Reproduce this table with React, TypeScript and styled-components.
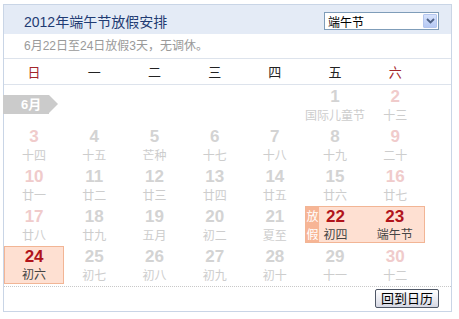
import React from 'react';
import styled, { createGlobalStyle } from 'styled-components';

type Day = { n: number; lunar: string; weekend?: boolean };

const weeks: (Day | null)[][] = [
  [null, null, null, null, null, { n: 1, lunar: '国际儿童节' }, { n: 2, lunar: '十三', weekend: true }],
  [
    { n: 3, lunar: '十四', weekend: true },
    { n: 4, lunar: '十五' },
    { n: 5, lunar: '芒种' },
    { n: 6, lunar: '十七' },
    { n: 7, lunar: '十八' },
    { n: 8, lunar: '十九' },
    { n: 9, lunar: '二十', weekend: true },
  ],
  [
    { n: 10, lunar: '廿一', weekend: true },
    { n: 11, lunar: '廿二' },
    { n: 12, lunar: '廿三' },
    { n: 13, lunar: '廿四' },
    { n: 14, lunar: '廿五' },
    { n: 15, lunar: '廿六' },
    { n: 16, lunar: '廿七', weekend: true },
  ],
  [
    { n: 17, lunar: '廿八', weekend: true },
    { n: 18, lunar: '廿九' },
    { n: 19, lunar: '五月' },
    { n: 20, lunar: '初二' },
    { n: 21, lunar: '夏至' },
  ],
  [
    null,
    { n: 25, lunar: '初七' },
    { n: 26, lunar: '初八' },
    { n: 27, lunar: '初九' },
    { n: 28, lunar: '初十' },
    { n: 29, lunar: '十一' },
    { n: 30, lunar: '十二', weekend: true },
  ],
];

const weekdays = ['日', '一', '二', '三', '四', '五', '六'];

const App = () => {
  return (
    <Page>
      <GlobalStyle />
      <Box>
        <Header>
          <Title>2012年端午节放假安排</Title>
          <Select>
            <span>端午节</span>
            <SelectArrow>
              <svg width='9' height='6' viewBox='0 0 9 6'>
                <path d='M1 1 L4.5 4.5 L8 1' stroke='#4d6185' strokeWidth='1.8' fill='none' />
              </svg>
            </SelectArrow>
          </Select>
        </Header>
        <Sub>6月22日至24日放假3天，无调休。</Sub>
        <WeekRow>
          {weekdays.map((w, i) => (
            <WeekName key={w} $red={i === 0 || i === 6}>
              {w}
            </WeekName>
          ))}
        </WeekRow>
        <Grid>
          {weeks.map((week, wi) => (
            <React.Fragment key={wi}>
              {wi === 0 && (
                <TagCell>
                  <MonthTag>6月</MonthTag>
                </TagCell>
              )}
              {week.map((d, di) => {
                if (wi === 0 && di < 5) return null;
                if (!d) {
                  if (wi === 4 && di === 0) {
                    return (
                      <HiCell key={di}>
                        <HiNum>24</HiNum>
                        <HiLunar>初六</HiLunar>
                      </HiCell>
                    );
                  }
                  return <Cell key={di} />;
                }
                return (
                  <Cell key={di}>
                    <Num $weekend={d.weekend}>{d.n}</Num>
                    <Lunar>{d.lunar}</Lunar>
                  </Cell>
                );
              })}
              {wi === 3 && (
                <HolidayBlock>
                  <Strip>
                    <span>放</span>
                    <span>假</span>
                  </Strip>
                  <HiDay>
                    <HiNum>22</HiNum>
                    <HiLunar>初四</HiLunar>
                  </HiDay>
                  <HiDay>
                    <HiNum>23</HiNum>
                    <HiLunar>端午节</HiLunar>
                  </HiDay>
                </HolidayBlock>
              )}
            </React.Fragment>
          ))}
        </Grid>
        <Footer>
          <BackButton>回到日历</BackButton>
        </Footer>
      </Box>
    </Page>
  );
};

const GlobalStyle = createGlobalStyle`
  body {
    margin: 0;
    background: #fff;
    font-family: 'Liberation Sans', 'Noto Sans CJK SC', sans-serif;
  }
`;

const Page = styled.div`
  padding: 4px 0 0 3px;
`;

const Box = styled.div`
  width: 447px;
  border: 1px solid #c9d5e6;
  background: #fff;
`;

const Header = styled.div`
  height: 29px;
  background: #e4ebf6;
  display: flex;
  align-items: center;
  justify-content: space-between;
  padding: 0 12px 0 20px;
`;

const Title = styled.div`
  font-size: 14px;
  color: #1f3b73;
  margin-top: 2px;
`;

const Select = styled.div`
  box-sizing: border-box;
  width: 115px;
  height: 18px;
  border: 1px solid #7f9db9;
  background: #fff;
  display: flex;
  align-items: center;
  justify-content: space-between;
  padding: 0 1px 0 3px;
  font-size: 12px;
  color: #000;
  margin-top: 3px;
`;

const SelectArrow = styled.div`
  box-sizing: border-box;
  width: 14px;
  height: 14px;
  border: 1px solid #b4c6ee;
  border-radius: 1px;
  background: linear-gradient(#d6e2fc, #b6c9f4);
  display: flex;
  align-items: center;
  justify-content: center;
`;

const Sub = styled.div`
  box-sizing: border-box;
  height: 25px;
  border-bottom: 1px solid #dde3ec;
  padding-left: 20px;
  font-size: 12px;
  line-height: 24px;
  color: #9a9a9a;
`;

const WeekRow = styled.div`
  box-sizing: border-box;
  height: 26px;
  border-bottom: 1px solid #dde3ec;
  display: grid;
  grid-template-columns: repeat(7, 60.2px);
  align-items: center;
`;

const WeekName = styled.div<{ $red?: boolean }>`
  text-align: center;
  font-size: 13px;
  color: ${(p) => (p.$red ? '#a3262b' : '#222')};
`;

const Grid = styled.div`
  display: grid;
  grid-template-columns: repeat(7, 60.2px);
  grid-auto-rows: 40px;
  margin-bottom: 1px;
`;

const Cell = styled.div`
  display: flex;
  flex-direction: column;
  align-items: center;
  padding-top: 2px;
`;

const TagCell = styled.div`
  grid-column: span 5;
  display: flex;
  align-items: center;
  padding-bottom: 2px;
`;

const MonthTag = styled.div`
  position: relative;
  width: 46px;
  height: 19px;
  margin-left: -1px;
  background: #cbcbcb;
  color: #fff;
  font-size: 13px;
  font-weight: bold;
  line-height: 19px;
  padding-left: 18px;
  box-sizing: border-box;
  &::after {
    content: '';
    position: absolute;
    right: -9px;
    top: 0;
    border-left: 9px solid #cbcbcb;
    border-top: 9.5px solid transparent;
    border-bottom: 9.5px solid transparent;
  }
`;

const Num = styled.div<{ $weekend?: boolean }>`
  font-size: 17px;
  font-weight: bold;
  line-height: 20px;
  color: ${(p) => (p.$weekend ? '#f0cbcb' : '#d3d3d3')};
`;

const Lunar = styled.div`
  font-size: 12px;
  line-height: 18px;
  color: #cdcdcd;
`;

const HiCell = styled.div`
  box-sizing: border-box;
  margin: 1px 0 1px 0;
  border: 1px solid #f2b595;
  background: #fee0d2;
  display: flex;
  flex-direction: column;
  align-items: center;
`;

const HolidayBlock = styled.div`
  grid-column: span 2;
  position: relative;
  box-sizing: border-box;
  margin: 1px 0 2px 0;
  border: 1px solid #f2b595;
  background: #fee0d2;
  display: grid;
  grid-template-columns: 1fr 1fr;
`;

const HiDay = styled.div`
  display: flex;
  flex-direction: column;
  align-items: center;
`;

const HiNum = styled.div`
  font-size: 17px;
  font-weight: bold;
  line-height: 20px;
  color: #b1141b;
`;

const HiLunar = styled.div`
  font-size: 12px;
  line-height: 16px;
  color: #444;
`;

const Strip = styled.div`
  position: absolute;
  left: 0;
  top: 0;
  bottom: 0;
  width: 13px;
  background: #f7b595;
  color: #fff;
  font-size: 12px;
  display: flex;
  flex-direction: column;
  justify-content: space-around;
  align-items: center;
`;

const Footer = styled.div`
  border-top: 1px dotted #c8c8c8;
  display: flex;
  justify-content: flex-end;
  padding: 2px 12px 3px 0;
  margin-top: 1px;
`;

const BackButton = styled.button`
  box-sizing: border-box;
  width: 64px;
  height: 19px;
  padding: 0;
  border: 1px solid #4f5766;
  border-radius: 2px;
  background: linear-gradient(#ffffff, #e8e9f0 60%, #d5d7e3);
  font-family: 'Liberation Sans', 'Noto Sans CJK SC', sans-serif;
  font-size: 13px;
  color: #000;
  line-height: 17px;
`;

export default App;
